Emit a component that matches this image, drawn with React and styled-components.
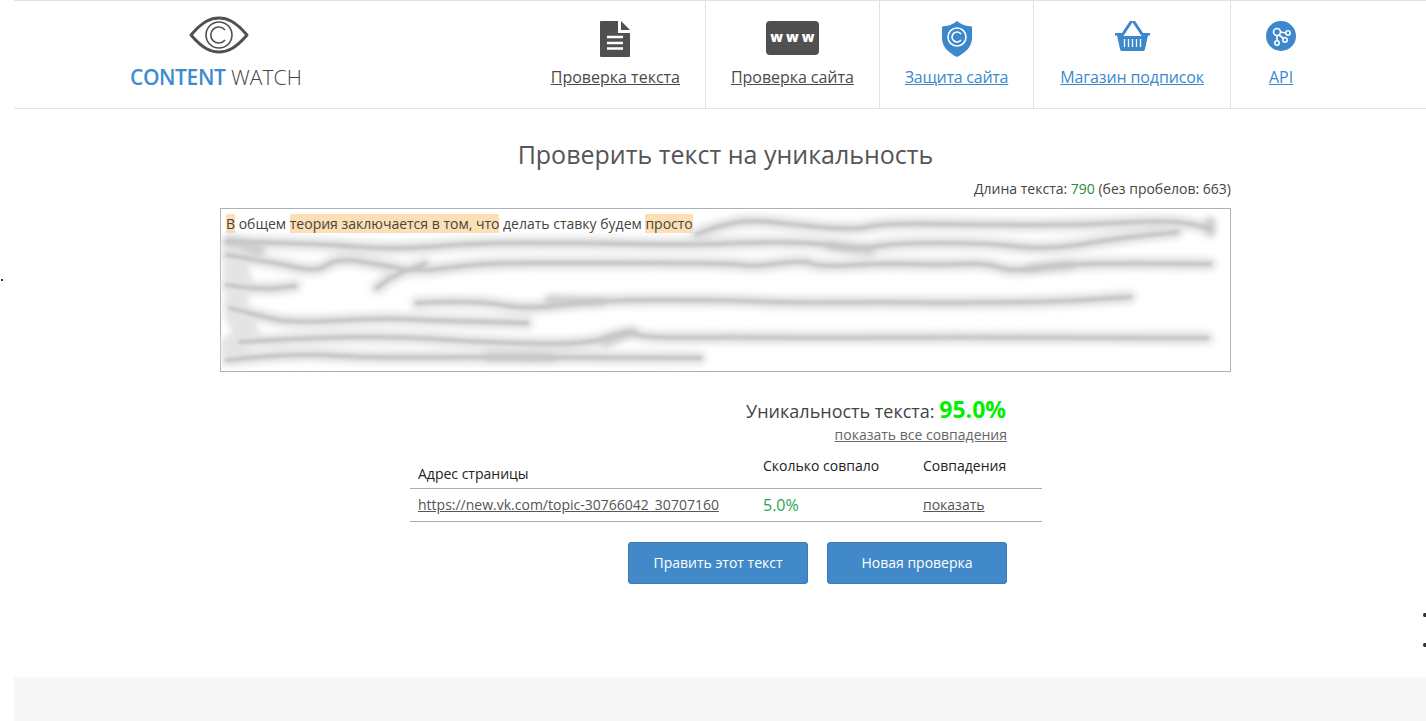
import styled, { createGlobalStyle } from 'styled-components';

const GlobalStyle = createGlobalStyle`
  html, body {
    margin: 0;
    padding: 0;
    background: #fff;
    font-family: "Open Sans", "Liberation Sans", sans-serif;
    color: #444;
  }
`;

const Page = styled.div`
  position: relative;
  display: flex;
  flex-direction: column;
  min-height: 100vh;
  padding-left: 14px;
  box-sizing: border-box;
  overflow: hidden;
`;

const Header = styled.header`
  display: flex;
  height: 109px;
  box-sizing: border-box;
  border-top: 1px solid #e2e2e2;
  border-bottom: 1px solid #e2e2e2;
`;

const Logo = styled.a`
  display: flex;
  flex-direction: column;
  align-items: center;
  width: 172px;
  margin-left: 116px;
  padding-top: 15px;
  svg {
    margin-left: 5px;
  }
`;

const LogoText = styled.div`
  margin-top: 9px;
  font-size: 21px;
  font-weight: 300;
  line-height: 28px;
  white-space: nowrap;
  color: #444;
  letter-spacing: 0.1px;
  b {
    font-weight: 600;
    color: #3d8bd0;
    letter-spacing: -0.4px;
  }
`;

const Nav = styled.nav`
  display: flex;
  margin-left: auto;
  padding-right: 89px;
`;

const NavCell = styled.div`
  display: flex;
  flex-direction: column;
  align-items: center;
  padding: 20px ${(p) => p.$right}px 0 ${(p) => p.$left}px;
  border-right: ${(p) => (p.$last ? 'none' : '1px solid #e2e2e2')};
`;

const NavIcon = styled.div`
  display: flex;
  height: 37px;
  align-items: flex-start;
`;

const NavLink = styled.a`
  margin-top: 8px;
  font-size: 16px;
  line-height: 22px;
  white-space: nowrap;
  text-decoration: underline;
  letter-spacing: ${(p) => p.$spacing}px;
  color: ${(p) => (p.$blue ? '#3d88cc' : '#4a4a4a')};
`;

const Main = styled.main`
  flex: 1;
  width: 1011px;
  margin-left: 206px;
`;

const Title = styled.h1`
  margin: 27px 0 0;
  text-align: center;
  font-size: 25px;
  line-height: 36px;
  font-weight: 400;
  color: #555;
`;

const Length = styled.div`
  margin-top: 8px;
  text-align: right;
  font-size: 14px;
  line-height: 18px;
  color: #444;
  span {
    color: #2a8a3a;
  }
`;

const TextBox = styled.div`
  position: relative;
  height: 164px;
  margin-top: 10px;
  box-sizing: border-box;
  border: 1px solid #aab2ba;
  padding: 5px;
  font-size: 14px;
  line-height: 19px;
  color: #444;
`;

const Hit = styled.span`
  background: #fddfb3;
`;

const Smear = styled.svg`
  position: absolute;
  left: -1px;
  top: -1px;
  width: 1011px;
  height: 164px;
  pointer-events: none;
`;

const Score = styled.div`
  margin: 23px 225px 0 0;
  text-align: right;
  font-size: 18px;
  line-height: 28px;
  color: #444;
  b {
    font-size: 23px;
    font-weight: 700;
    color: #00f000;
  }
`;

const ShowAll = styled.a`
  display: block;
  margin: 1px 224px 0 0;
  text-align: right;
  font-size: 14px;
  line-height: 18px;
  color: #666;
  text-decoration: underline;
`;

const Table = styled.table`
  width: 632px;
  margin: 1px 0 0 190px;
  border-collapse: collapse;
  table-layout: fixed;
  font-size: 14px;
`;

const HeadCell = styled.th`
  height: 43px;
  padding: 0 0 ${(p) => (p.$low ? '5px' : '13px')} 8px;
  box-sizing: border-box;
  width: ${(p) => p.$w}px;
  vertical-align: bottom;
  text-align: left;
  font-weight: 400;
  line-height: 18px;
  color: #222;
  border-bottom: 1px solid #aab0b6;
`;

const Cell = styled.td`
  height: 33px;
  padding: 0 0 0 8px;
  box-sizing: border-box;
  border-bottom: 1px solid #aab0b6;
  font-size: ${(p) => (p.$big ? '16px' : '14px')};
  color: ${(p) => (p.$big ? '#1fa84f' : '#555')};
  a {
    color: #555;
    text-decoration: underline;
  }
`;

const Buttons = styled.div`
  display: flex;
  justify-content: flex-end;
  gap: 19px;
  margin: 20px 224px 0 0;
`;

const Button = styled.button`
  width: 180px;
  height: 42px;
  border: 1px solid #3a7bb8;
  border-radius: 3px;
  background: #4189c9;
  color: #fff;
  font-family: inherit;
  font-size: 14px;
`;

const Footer = styled.footer`
  height: 44px;
  background: #f7f7f7;
`;

const Speck = styled.i`
  position: absolute;
  left: ${(p) => p.$x}px;
  top: ${(p) => p.$y}px;
  width: ${(p) => p.$w}px;
  height: ${(p) => p.$h}px;
  background: #333;
  border-radius: ${(p) => (p.$tip ? '50% 0 0 50%' : '0')};
`;

// blurred-out part of the text, points are box coordinates
const smearLines = [
  [[477, 26], [500, 17], [533, 12], [577, 17], [633, 22], [667, 15], [767, 17], [867, 17], [950, 12], [990, 20]],
  [[7, 34], [90, 35], [173, 42], [257, 35], [357, 35], [473, 37], [540, 34], [600, 35], [640, 42], [673, 35], [767, 35], [827, 42], [900, 30], [957, 24]],
  [[7, 47], [57, 55], [97, 64], [117, 50], [163, 57], [197, 64], [263, 55], [357, 55], [510, 55], [533, 59], [583, 52], [600, 59], [667, 55], [717, 57], [767, 55], [793, 64], [850, 55], [990, 56]],
  [[205, 56], [175, 66], [157, 80]],
  [[7, 77], [40, 82], [75, 78]],
  [[197, 95], [257, 92], [307, 102], [373, 92], [510, 92], [567, 95], [667, 94], [717, 95], [833, 94], [910, 89]],
  [[10, 100], [40, 108], [73, 115], [163, 110], [197, 112], [307, 115]],
  [[20, 134], [100, 129], [190, 129], [257, 134], [367, 137], [410, 122], [423, 130], [510, 129], [600, 130], [733, 129], [900, 130], [987, 130]],
  [[7, 152], [73, 145], [150, 150], [223, 149], [480, 150]],
];

// short soft blots where the smudge swells
const smearBlots = [
  'M990 14 V24',
  'M10 32 L40 42',
  'M610 38 L650 42',
  'M810 60 L850 58',
  'M330 92 L380 94',
  'M385 134 L412 124',
  'M270 149 L330 150',
];

const smoothPath = (points) => {
  let d = `M${points[0][0]} ${points[0][1]}`;
  for (let i = 1; i < points.length - 1; i++) {
    const midX = (points[i][0] + points[i + 1][0]) / 2;
    const midY = (points[i][1] + points[i + 1][1]) / 2;
    d += ` Q${points[i][0]} ${points[i][1]} ${midX} ${midY}`;
  }
  const end = points[points.length - 1];
  return `${d} L${end[0]} ${end[1]}`;
};

const EyeIcon = () => (
  <svg width="60" height="38" viewBox="0 0 60 38" fill="none" stroke="#505050">
    <path d="M2 19 C14 5 22 2 30 2 C38 2 46 5 58 19 C46 33 38 36 30 36 C22 36 14 33 2 19 Z" strokeWidth="3" strokeLinejoin="round" />
    <circle cx="30" cy="19" r="13" strokeWidth="1.6" />
    <path d="M36 14 A8 8 0 1 0 36 24" strokeWidth="1.6" />
  </svg>
);

const FileIcon = () => (
  <svg width="30" height="36" viewBox="0 0 30 36">
    <path d="M1 0 H18 V12 H30 V35 a1 1 0 0 1 -1 1 H1 a1 1 0 0 1 -1 -1 V1 a1 1 0 0 1 1 -1 Z" fill="#505050" />
    <path d="M21 0 L30 9 H21 Z" fill="#505050" />
    <path d="M7 16 H23 M7 22 H23 M7 27.500 H23" stroke="#fff" strokeWidth="2.4" />
  </svg>
);

const WwwBadge = styled.div`
  display: flex;
  align-items: center;
  justify-content: center;
  width: 53px;
  height: 34px;
  border-radius: 4px;
  background: #505050;
  color: #fff;
  font-family: "Open Sans", sans-serif;
  font-size: 14px;
  font-weight: 800;
  letter-spacing: 3px;
  padding: 0 0 4px 3px;
  box-sizing: border-box;
`;

const ShieldIcon = () => (
  <svg width="30" height="36" viewBox="0 0 30 36" fill="none">
    <path d="M15 0 C19 3.500 24 5 30 5.500 V17 C30 26 23 32 15 36 C7 32 0 26 0 17 V5.500 C6 5 11 3.500 15 0 Z" fill="#3d88cc" />
    <circle cx="15" cy="16" r="9" stroke="#fff" strokeWidth="1.6" />
    <path d="M19 13 A5 5 0 1 0 19 19" stroke="#fff" strokeWidth="1.6" />
  </svg>
);

const BasketIcon = () => (
  <svg width="35" height="30" viewBox="0 0 35 30" fill="none">
    <path d="M8 13 L16 1 M27 13 L19 1" stroke="#3d88cc" strokeWidth="3" strokeLinecap="round" />
    <path d="M0 12 H7 L9 15 H26 L28 12 H35 V14.500 H33 L30 28 a2 2 0 0 1 -2 2 H7 a2 2 0 0 1 -2 -2 L2 14.500 H0 Z" fill="#3d88cc" />
    <path d="M9.500 18 V26 M13.500 18 V26 M17.500 18 V26 M21.500 18 V26 M25.500 18 V26" stroke="#fff" strokeWidth="1.3" />
  </svg>
);

const ApiIcon = () => (
  <svg width="30" height="30" viewBox="0 0 30 30" fill="none">
    <circle cx="15" cy="15" r="15" fill="#3d88cc" />
    <g stroke="#fff" strokeWidth="1.6">
      <circle cx="11" cy="11" r="3.500" />
      <circle cx="22" cy="12" r="2.200" />
      <circle cx="19" cy="19" r="2.200" />
      <circle cx="11" cy="22" r="2.200" />
      <path d="M14.500 11 L19.800 12 M13 14 L17.500 17.500 M11 14.500 V19.800" />
    </g>
  </svg>
);

const navItems = [
  { label: 'Проверка текста', icon: <FileIcon />, left: 25, right: 25, spacing: 0 },
  { label: 'Проверка сайта', icon: <WwwBadge>www</WwwBadge>, left: 25, right: 25, spacing: -0.05 },
  { label: 'Защита сайта', icon: <ShieldIcon />, blue: true, left: 25, right: 25, spacing: -0.25 },
  { label: 'Магазин подписок', icon: <BasketIcon />, blue: true, left: 26, right: 26, spacing: -0.12 },
  { label: 'API', icon: <ApiIcon />, blue: true, left: 35, right: 41, spacing: 0, last: true },
];

export default function App() {
  const paths = smearLines.map(smoothPath);
  return (
    <Page>
      <GlobalStyle />
      <Header>
        <Logo>
          <EyeIcon />
          <LogoText>
            <b>CONTENT</b> WATCH
          </LogoText>
        </Logo>
        <Nav>
          {navItems.map((item) => (
            <NavCell key={item.label} $left={item.left} $right={item.right} $last={item.last}>
              <NavIcon>{item.icon}</NavIcon>
              <NavLink $blue={item.blue} $spacing={item.spacing}>{item.label}</NavLink>
            </NavCell>
          ))}
        </Nav>
      </Header>

      <Main>
        <Title>Проверить текст на уникальность</Title>
        <Length>
          Длина текста: <span>790</span> (без пробелов: 663)
        </Length>
        <TextBox>
          <Hit>В</Hit> общем <Hit>теория заключается в том, что</Hit> делать ставку будем <Hit>просто</Hit>
          <Smear viewBox="0 0 1011 164" fill="none">
            <defs>
              <filter id="soft" x="-5%" y="-30%" width="110%" height="160%">
                <feGaussianBlur stdDeviation="3" />
              </filter>
              <filter id="core" x="-5%" y="-30%" width="110%" height="160%">
                <feGaussianBlur stdDeviation="1.800" />
              </filter>
            </defs>
            <g filter="url(#soft)" stroke="#e0e0e0" strokeWidth="13" strokeLinecap="round">
              {paths.map((d) => (
                <path key={d} d={d} />
              ))}
              <path d="M14 62 C30 70 8 95 18 110 S34 125 12 138" stroke="#e4e4e4" strokeWidth="24" />
              {smearBlots.map((d) => (
                <path key={d} d={d} stroke="#cecece" strokeWidth="11" />
              ))}
            </g>
            <g filter="url(#core)" stroke="#c6c6c6" strokeWidth="4" strokeLinecap="round">
              {paths.map((d) => (
                <path key={d} d={d} />
              ))}
            </g>
          </Smear>
        </TextBox>

        <Score>
          Уникальность текста: <b>95.0%</b>
        </Score>
        <ShowAll>показать все совпадения</ShowAll>

        <Table>
          <thead>
            <tr>
              <HeadCell $w={345} $low>Адрес страницы</HeadCell>
              <HeadCell $w={160}>Сколько совпало</HeadCell>
              <HeadCell $w={127}>Совпадения</HeadCell>
            </tr>
          </thead>
          <tbody>
            <tr>
              <Cell><a>https://new.vk.com/topic-30766042_30707160</a></Cell>
              <Cell $big>5.0%</Cell>
              <Cell><a>показать</a></Cell>
            </tr>
          </tbody>
        </Table>

        <Buttons>
          <Button>Править этот текст</Button>
          <Button>Новая проверка</Button>
        </Buttons>
      </Main>

      <Footer />
      <Speck $x={1} $y={279} $w={2} $h={2} />
      <Speck $x={1423} $y={613} $w={3} $h={4} $tip />
      <Speck $x={1423} $y={643} $w={3} $h={4} $tip />
    </Page>
  );
}
